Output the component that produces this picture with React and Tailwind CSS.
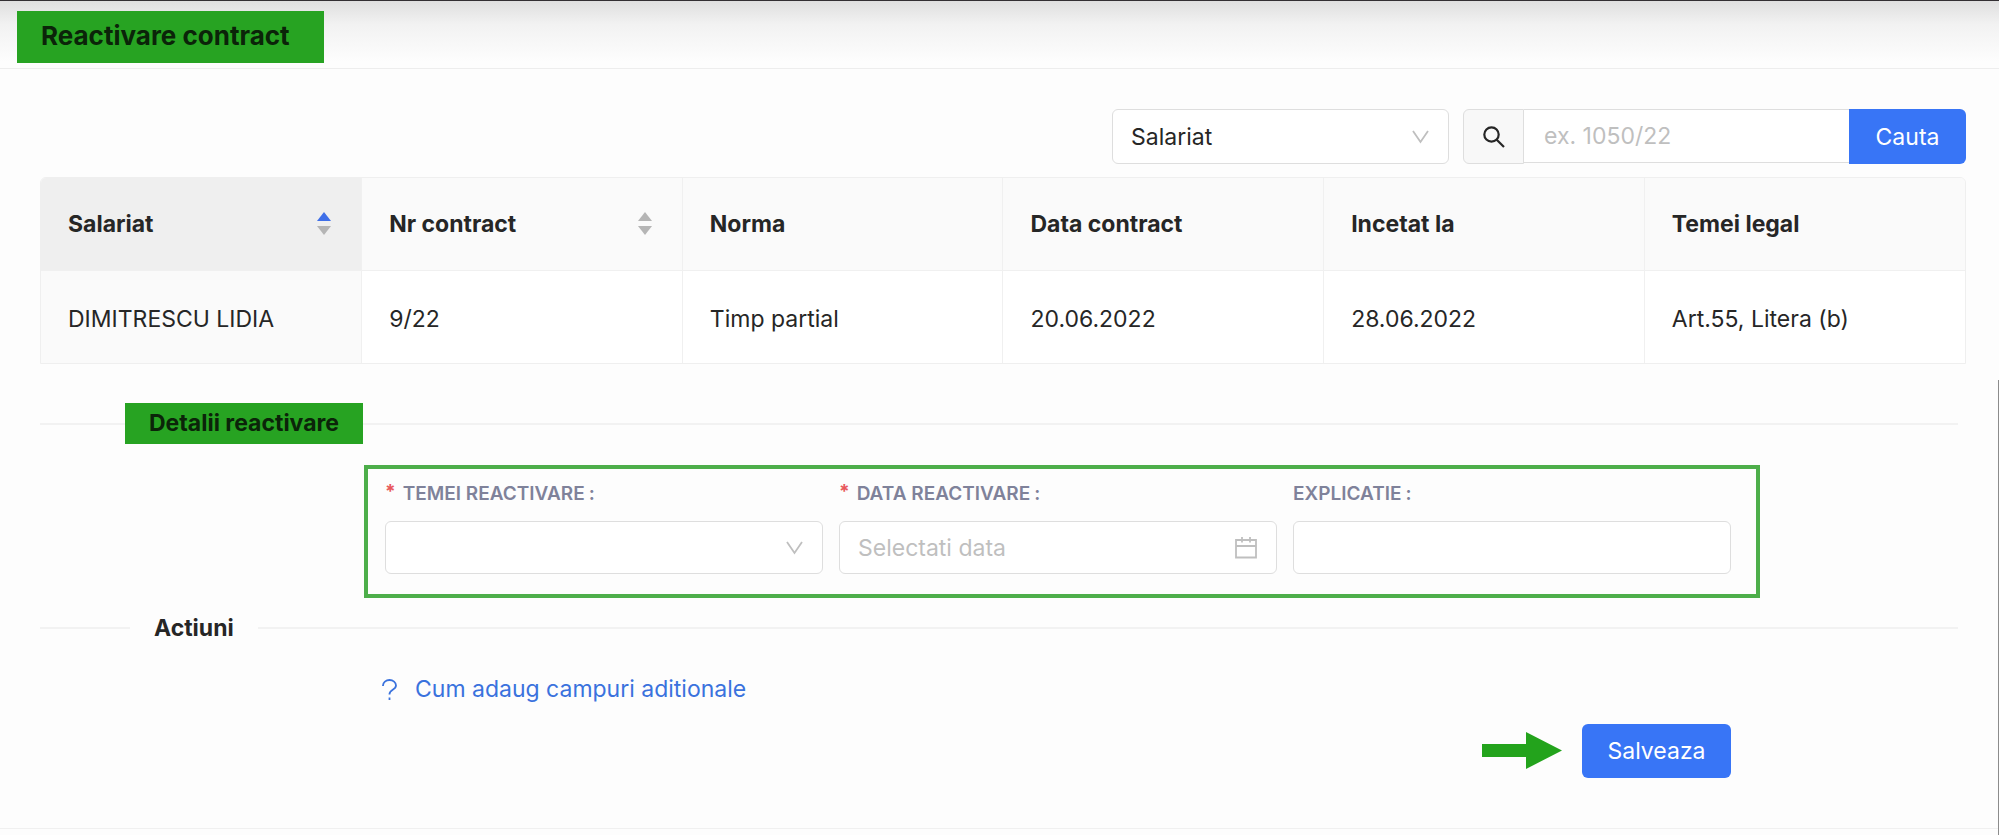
import React, { useState } from "react";

const COLS = [
  { id: "salariat", header: "Salariat", sort: "asc" },
  { id: "nr", header: "Nr contract", sort: "none" },
  { id: "norma", header: "Norma" },
  { id: "data", header: "Data contract" },
  { id: "incetat", header: "Incetat la" },
  { id: "temei", header: "Temei legal" },
];

const ROWS = [
  {
    salariat: "DIMITRESCU LIDIA",
    nr: "9/22",
    norma: "Timp partial",
    data: "20.06.2022",
    incetat: "28.06.2022",
    temei: "Art.55, Litera (b)",
  },
];

const FIELD =
  "block w-full rounded-md border border-[#dedede] bg-white px-[18px] text-[23px] text-[#262626] outline-none placeholder:text-[#bfbfbf]";

function Chevron() {
  return (
    <svg
      className="pointer-events-none absolute right-5 top-1/2 -translate-y-1/2"
      width="17"
      height="14"
      viewBox="0 0 17 14"
      fill="none"
      stroke="#bfbfbf"
      strokeWidth="1.8"
    >
      <path d="M1 1l7.500 11L16 1" />
    </svg>
  );
}

function SortButton({ dir, label }) {
  return (
    <button type="button" aria-label={`Sorteaza ${label}`}>
      <svg width="14" height="23" viewBox="0 0 14 23">
        <path d="M7 0l7 9H0z" fill={dir === "asc" ? "#3f6fe8" : "#b5b5b5"} />
        <path d="M7 23l7-9H0z" fill="#b5b5b5" />
      </svg>
    </button>
  );
}

function Label({ htmlFor, required, children }) {
  return (
    <label
      htmlFor={htmlFor}
      className="flex h-6 items-center text-[19px] leading-6 font-semibold text-[#7f829a]"
    >
      {required && (
        <span className="mr-[7px] self-start leading-5 font-bold text-[#e8585c]">
          *
        </span>
      )}
      {children}
      <span className="ml-1">:</span>
    </label>
  );
}

export default function App() {
  const [camp, setCamp] = useState("Salariat");
  const [nr, setNr] = useState("");
  const [temei, setTemei] = useState("");
  const [data, setData] = useState("");
  const [explicatie, setExplicatie] = useState("");

  return (
    <div className="relative min-h-screen bg-[#fdfdfd] font-['Inter','Liberation_Sans',sans-serif] text-[23px] leading-8 text-[#262626]">
      <header className="flex h-[69px] border-t border-b border-t-[#332f33] border-b-[#ededed] bg-linear-to-b from-[#dfdfdf] via-[#f2f2f2] via-35% to-[#fdfdfd] to-90% pt-[10px] pl-[17px]">
        <h1 className="h-[52px] bg-[#27a322] pr-[34px] pl-6 text-[26px] leading-[50px] font-bold text-[#0b2409]">
          Reactivare contract
        </h1>
      </header>

      <main className="border-b border-[#f0f0f0] pt-10 pr-[33px] pb-[50px] pl-10">
        {/* cautare */}
        <form
          className="flex justify-end"
          onSubmit={(e) => e.preventDefault()}
        >
          <div className="relative mr-[14px] w-[337px]">
            <select
              aria-label="Cauta dupa"
              value={camp}
              onChange={(e) => setCamp(e.target.value)}
              className={`${FIELD} h-[55px] appearance-none`}
            >
              <option>Salariat</option>
              <option>Nr contract</option>
            </select>
            <Chevron />
          </div>
          <span className="flex w-[61px] items-center justify-center rounded-l-md border border-[#dedede] bg-[#f8f8f8]">
            <svg
              width="22"
              height="22"
              viewBox="0 0 22 22"
              fill="none"
              stroke="#262626"
              strokeWidth="2.2"
            >
              <circle cx="8.5" cy="8.5" r="7.2" />
              <path d="M13.500 13.500l7.500 7.500" />
            </svg>
          </span>
          <input
            aria-label="Numar contract"
            value={nr}
            onChange={(e) => setNr(e.target.value)}
            placeholder="ex. 1050/22"
            className="h-[54px] w-[325px] border-y border-[#dedede] bg-white px-5 text-[23px] outline-none placeholder:text-[#bfbfbf]"
          />
          <button
            type="submit"
            className="h-[55px] w-[117px] rounded-r-md bg-[#3875f6] text-white"
          >
            Cauta
          </button>
        </form>

        <div className="mt-[13px] overflow-hidden rounded-t-md border border-[#efefef]">
          <table className="w-full table-fixed border-collapse text-left">
            <thead>
              <tr>
                {COLS.map((c) => (
                  <th
                    key={c.id}
                    className={`h-[92px] border-r border-b border-[#f0f0f0] pr-[30px] pl-[27px] font-bold last:border-r-0 ${
                      c.sort === "asc" ? "bg-[#efefef]" : "bg-[#fafafa]"
                    }`}
                  >
                    <div className="flex items-center justify-between">
                      {c.header}
                      {c.sort && <SortButton dir={c.sort} label={c.header} />}
                    </div>
                  </th>
                ))}
              </tr>
            </thead>
            <tbody>
              {ROWS.map((r) => (
                <tr key={r.nr}>
                  {COLS.map((c) => (
                    <td
                      key={c.id}
                      className={`h-[93px] border-r border-[#f0f0f0] pt-1 pr-[30px] pl-[27px] last:border-r-0 ${
                        c.sort === "asc" ? "bg-[#fafafa]" : "bg-white"
                      }`}
                    >
                      {r[c.id]}
                    </td>
                  ))}
                </tr>
              ))}
            </tbody>
          </table>
        </div>

        {/* detalii */}
        <div className="mt-[39px] mr-2 flex items-center">
          <span className="h-[2px] w-[85px] bg-[#f2f2f2]" />
          <h2 className="h-[41px] bg-[#27a322] px-6 leading-[41px] font-bold text-[#0b2409]">
            Detalii reactivare
          </h2>
          <span className="h-[2px] flex-1 bg-[#f2f2f2]" />
        </div>

        <div className="mt-[21px] mr-[206px] ml-[324px] grid grid-cols-3 gap-4 border-4 border-[#4dae4a] pt-[13px] pr-[25px] pb-5 pl-[17px]">
          <div>
            <Label htmlFor="temei" required>
              TEMEI REACTIVARE
            </Label>
            <div className="relative mt-[15px]">
              <select
                id="temei"
                value={temei}
                onChange={(e) => setTemei(e.target.value)}
                className={`${FIELD} h-[53px] appearance-none`}
              >
                <option value=""></option>
              </select>
              <Chevron />
            </div>
          </div>
          <div>
            <Label htmlFor="data" required>
              DATA REACTIVARE
            </Label>
            <div className="relative mt-[15px]">
              <input
                id="data"
                value={data}
                onChange={(e) => setData(e.target.value)}
                placeholder="Selectati data"
                className={`${FIELD} h-[53px]`}
              />
              <svg
                className="pointer-events-none absolute top-1/2 right-5 -translate-y-1/2"
                width="22"
                height="22"
                viewBox="0 0 22 22"
                fill="none"
                stroke="#bfbfbf"
                strokeWidth="1.8"
              >
                <path d="M1 3h20v17.500H1zM1 9h20M7 0v5.500M15 0v5.500" />
              </svg>
            </div>
          </div>
          <div>
            <Label htmlFor="explicatie">EXPLICATIE</Label>
            <div className="mt-[15px]">
              <input
                id="explicatie"
                value={explicatie}
                onChange={(e) => setExplicatie(e.target.value)}
                className={`${FIELD} h-[53px]`}
              />
            </div>
          </div>
        </div>

        {/* actiuni */}
        <div className="mt-[14px] mr-2 flex items-center">
          <span className="h-[2px] w-[90px] bg-[#f2f2f2]" />
          <h2 className="px-6 font-bold">Actiuni</h2>
          <span className="h-[2px] flex-1 bg-[#f2f2f2]" />
        </div>

        <div className="mt-[29px] mr-[235px] ml-[342px]">
          <a href="#ajutor" className="inline-flex items-center text-[#3a72dd]">
            <svg
              className="mr-[18px]"
              width="15"
              height="21"
              viewBox="0 0 15 21"
              fill="none"
              stroke="#3a72dd"
              strokeWidth="1.8"
            >
              <path d="M1 7V6.500a6.500 5.500 0 0 1 13 0c0 4.500-6.500 4-6.500 8.500v.500M7.500 18.500V21" />
            </svg>
            Cum adaug campuri aditionale
          </a>
          <div className="mt-4 flex items-center justify-end">
            <svg width="80" height="37" viewBox="0 0 80 37" className="mr-5">
              <path d="M0 12h44V0l36 18.500L44 37V25H0z" fill="#23a31c" />
            </svg>
            <button
              type="button"
              className="h-[54px] w-[149px] rounded-md bg-[#3875f6] text-white"
            >
              Salveaza
            </button>
          </div>
        </div>
      </main>

      <div className="absolute top-[380px] right-0 bottom-0 w-px bg-[#8c8c8c]" />
    </div>
  );
}
